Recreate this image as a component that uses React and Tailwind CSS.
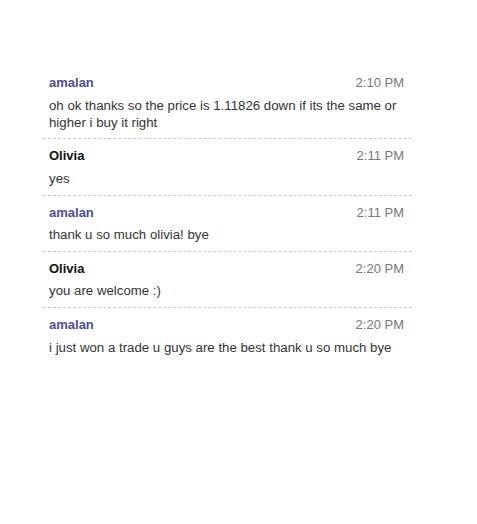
export default function App() {
  const msgs = [
    { n: "amalan", t: "2:10 PM", m: "oh ok thanks so the price is 1.11826 down if its the same or higher i buy it right", me: true },
    { n: "Olivia", t: "2:11 PM", m: "yes", me: false },
    { n: "amalan", t: "2:11 PM", m: "thank u so much olivia! bye", me: true },
    { n: "Olivia", t: "2:20 PM", m: "you are welcome :)", me: false },
    { n: "amalan", t: "2:20 PM", m: "i just won a trade u guys are the best thank u so much bye", me: true },
  ];
  return (
    <div className="w-[477px] h-[524px] bg-white pt-[66px] pl-[43px]" style={{ fontFamily: '"Liberation Sans", Arial, sans-serif' }}>
      <div className="w-[369px]">
        {msgs.map((x, i) => (
          <div key={i} className={`pl-[6px] pr-[8px] pt-[8px] pb-[7.75px] ${i < msgs.length - 1 ? "border-b border-dashed border-[#cccccc]" : ""}`}>
            <div className="flex justify-between items-center leading-[17px] text-[13px]">
              <span className={`font-bold ${x.me ? "text-[#4d4d99]" : "text-[#111111]"}`}>{x.n}</span>
              <span className="text-[#777777]">{x.t}</span>
            </div>
            <div className="mt-[5.5px] text-[13.25px] leading-[17px] text-[#333333]">{x.m}</div>
          </div>
        ))}
      </div>
    </div>
  );
}
